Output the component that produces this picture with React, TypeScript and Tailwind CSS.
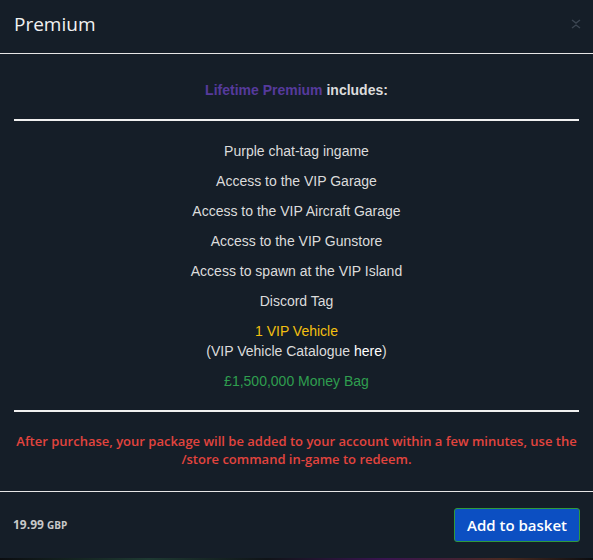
import React from 'react';

const perks: string[] = [
  'Purple chat-tag ingame',
  'Access to the VIP Garage',
  'Access to the VIP Aircraft Garage',
  'Access to the VIP Gunstore',
  'Access to spawn at the VIP Island',
  'Discord Tag',
];

const App: React.FC = () => {
  return (
    <div className="w-[593px] h-[560px] bg-[#0b0d10] overflow-hidden">
      <div className="bg-[#151e28] h-[558px] flex flex-col text-[#dcdcdc]">
        {/* header */}
        <div className="h-[54px] flex items-center justify-between pl-[14px] pr-[12px] border-b border-[#e6e6e6] font-['Open_Sans',sans-serif]">
          <h1 className="text-[19px] leading-none text-[#f2f2f2] -mt-[4px]">Premium</h1>
          <svg width="10" height="10" viewBox="0 0 10 10" className="-mt-[6px]">
            <path d="M1 1 L5 4 L9 1 M1 9 L5 6 L9 9" stroke="#3c4652" strokeWidth="1.4" fill="none" />
          </svg>
        </div>

        {/* body */}
        <div className="px-[14px] font-['Liberation_Sans',Arial,sans-serif] text-center">
          <div className="h-[67px] flex items-center justify-center border-b-2 border-[#f0f0f0] pt-[8px]">
            <p className="text-[14px] font-bold">
              <span className="text-[#563a9c]">Lifetime Premium</span> includes:
            </p>
          </div>
          <ul className="pt-[22px] text-[14px] leading-[16px]">
            {perks.map((p, i) => (
              <li key={i} className="h-[30px]">{p}</li>
            ))}
            <li className="text-[#f3c010]">1 VIP Vehicle</li>
            <li className="h-[34px] pt-[4px]">(VIP Vehicle Catalogue <span className="text-white">here</span>)</li>
            <li className="text-[#2f9e4f]">£1,500,000 Money Bag</li>
          </ul>
          <div className="border-b-2 border-[#f0f0f0] mt-[21px]" />
          <p className="pt-[20px] text-[13px] leading-[18px] font-semibold text-[#e2443e] font-['Open_Sans',sans-serif] h-[79px]">
            After purchase, your package will be added to your account within a few minutes, use the /store command in-game to redeem.
          </p>
        </div>

        {/* footer */}
        <div className="border-t border-[#e6e6e6] flex-1 flex items-center justify-between px-[13px] font-['Open_Sans',sans-serif]">
          <span className="text-[12px] font-bold text-[#c8c8c8]">
            19.99 <span className="text-[10px]">GBP</span>
          </span>
          <button className="h-[34px] px-[12px] bg-[#0c4fc2] border border-[#2f9a3c] rounded-[3px] text-white text-[15px] font-semibold">
            Add to basket
          </button>
        </div>
      </div>
      <div className="h-[2px] bg-[linear-gradient(90deg,#0b0d10_0%,#1e3a32_25%,#101418_45%,#3a1450_65%,#4a2a20_85%,#0b0d10_100%)]" />
    </div>
  );
};

export default App;
